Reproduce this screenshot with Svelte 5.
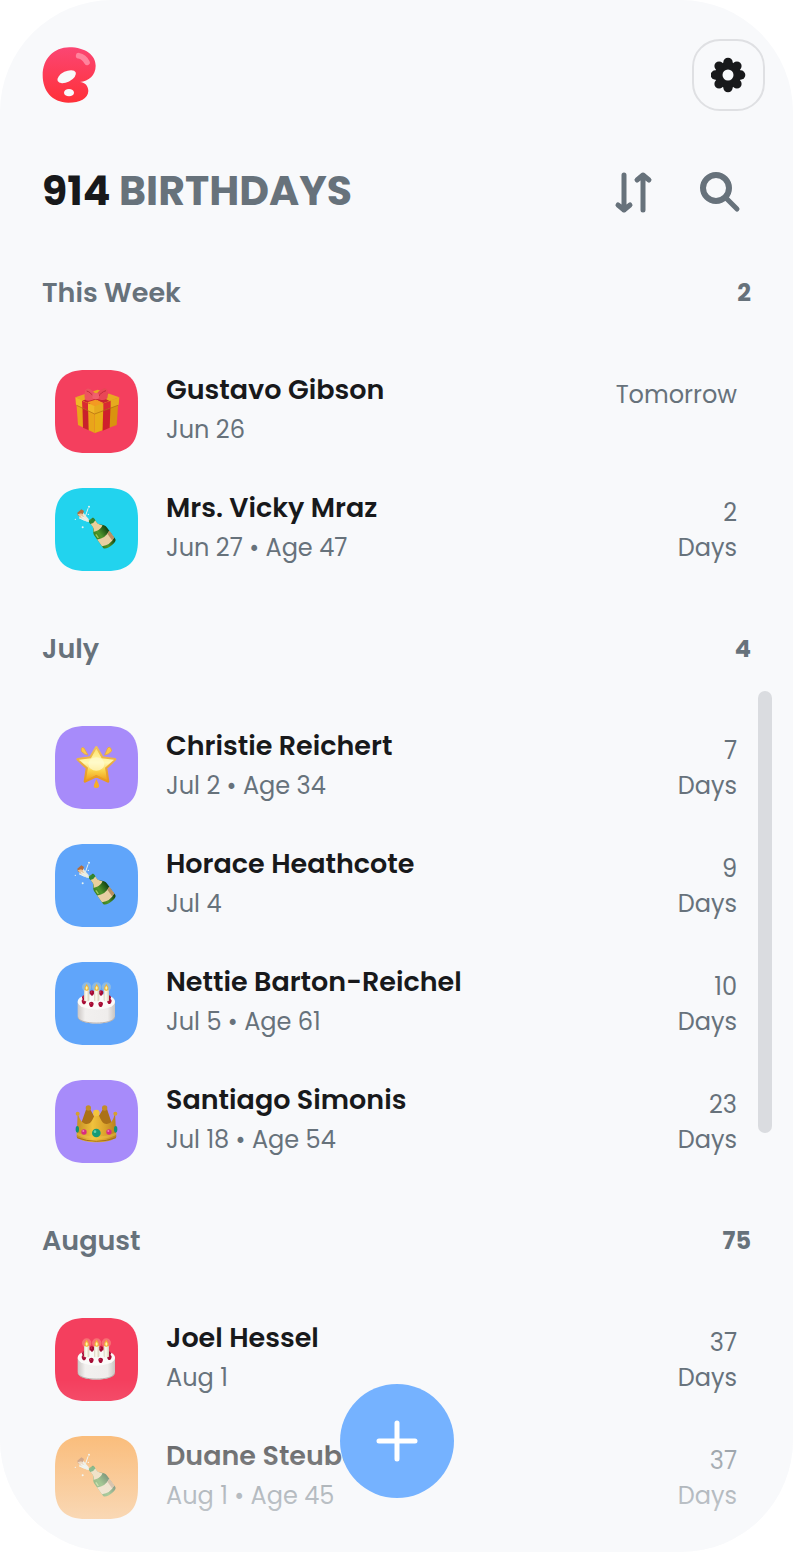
<script>
  const sections = [
    {
      title: 'This Week',
      count: 2,
      people: [
        { name: 'Gustavo Gibson', date: 'Jun 26', when: ['Tomorrow'], icon: 'gift', color: '#f43f5e' },
        { name: 'Mrs. Vicky Mraz', date: 'Jun 27 • Age 47', when: ['2', 'Days'], icon: 'bottle', color: '#22d3ee' }
      ]
    },
    {
      title: 'July',
      count: 4,
      people: [
        { name: 'Christie Reichert', date: 'Jul 2 • Age 34', when: ['7', 'Days'], icon: 'star', color: '#a78bfa' },
        { name: 'Horace Heathcote', date: 'Jul 4', when: ['9', 'Days'], icon: 'bottle', color: '#60a5fa' },
        { name: 'Nettie Barton-Reichel', date: 'Jul 5 • Age 61', when: ['10', 'Days'], icon: 'cake', color: '#60a5fa' },
        { name: 'Santiago Simonis', date: 'Jul 18 • Age 54', when: ['23', 'Days'], icon: 'crown', color: '#a78bfa' }
      ]
    },
    {
      title: 'August',
      count: 75,
      people: [
        { name: 'Joel Hessel', date: 'Aug 1', when: ['37', 'Days'], icon: 'cake', color: '#f43f5e' },
        { name: 'Duane Steuber', date: 'Aug 1 • Age 45', when: ['37', 'Days'], icon: 'bottle', color: '#fb9f3c' }
      ]
    }
  ];
  const lobes = [0, 45, 90, 135, 180, 225, 270, 315];
</script>

{#snippet gift()}
  <path d="M78 98 L134 118 L134 204 L84 180 Z" fill="#e9a51a" />
  <path d="M134 118 L206 98 L200 180 L134 204 Z" fill="#d9930f" />
  <path d="M134 124 L160 118 L157 196 L134 204 Z" fill="#e8ad17" />
  <path d="M97 112 L114 120 L116 196 L99 188 Z" fill="#c9202c" />
  <path d="M160 120 L182 112 L179 188 L158 197 Z" fill="#cf1f2d" />
  <path d="M76 97 L143 74 L208 97 L134 126 Z" fill="#e9a922" />
  <path d="M112 85 L126 80 L180 109 L160 117 Z M160 80 L176 86 L115 120 L97 107 Z" fill="#c92430" />
  <path d="M112 112 L136 104 L160 113 L134 124 Z" fill="#f39a22" />
  <path d="M76 97 L134 124 L134 146 L78 119 Z" fill="#f0b828" />
  <path d="M134 124 L208 97 L206 119 L134 146 Z" fill="#e6aa1e" />
  <path d="M96 107 L114 115 L114 138 L97 129 Z M160 115 L182 107 L182 128 L160 138 Z" fill="#d92932" />
  <path d="M80 121 L134 147 L204 121" fill="none" stroke="#ad6b12" stroke-width="2" />
  <path d="M137 99 C122 110 102 110 104 97 C102 80 107 68 116 71 C126 73 134 82 137 90 Z" fill="#ed5260" />
  <path d="M137 99 C154 109 174 107 173 94 C177 77 169 67 160 71 C148 75 142 83 137 90 Z" fill="#e94656" />
  <path d="M110 78 C119 80 126 88 129 94 M168 77 C157 80 150 87 147 93" stroke="#c22b3c" stroke-width="3" fill="none" />
  <rect x="127" y="84" width="20" height="19" rx="7" fill="#f0606c" />
{/snippet}

{#snippet bottle()}
  <g transform="rotate(-36 158 155)">
    <path d="M148 96 H165 V118 C166 127 181 130 181 146 V188 C181 200 136 200 136 188 V146 C136 130 147 127 148 118 Z" fill="url(#glass)" />
    <path d="M148 106 H165 V118 C166 124 171 128 174 132 C165 138 150 138 141 132 C145 128 148 124 148 118 Z" fill="#e9cf9c" />
    <path d="M136 157 Q158 169 181 157 V182 Q158 194 136 182 Z" fill="#e8cfa3" />
    <path d="M171 161 L181 157 V182 L171 186 Z" fill="#b78f61" />
    <path d="M147 98 Q157 103 166 98 V107 Q157 112 147 107 Z" fill="#2d8736" />
    <path d="M142 142 V155" stroke="#9fc95c" stroke-width="4" />
  </g>
  <path d="M88 104 L98 88 L116 108 L117 117 L110 116 Z" fill="#e8eadd" />
  <path d="M82 89 L94 79 L102 84 L98 94 L84 99 Z" fill="#b46d3c" />
  <path d="M83 94 L94 91 L102 101 L91 104 Z" fill="#e8c298" />
  <path d="M93 99 L111 111 M107 97 L114 77 M88 105 L103 112" stroke="#e8f3ef" stroke-width="3" stroke-linecap="round" />
  <circle cx="117" cy="71" r="3" fill="#e8f3ef" />
  <circle cx="76" cy="109" r="2" fill="#e8f3ef" />
  <circle cx="98" cy="133" r="3" fill="#e8f3ef" />
  <circle cx="115" cy="94" r="2" fill="#fff" />
{/snippet}

{#snippet star()}
  <g transform="translate(0 -3)">
    <path d="M139 82 L157 113 L195 118 L168 144 L174 184 L139 168 L105 184 L111 144 L83 118 L121 113 Z" fill="url(#gold)" stroke="url(#goldEdge)" stroke-width="8" stroke-linejoin="round" />
    <path d="M139 86 L155 115 L192 119 L165 143 L171 180 L139 164 L108 180 L114 143 L87 119 L123 115 Z" fill="url(#gold)" />
    <ellipse cx="139" cy="132" rx="24" ry="20" fill="#fffbd2" opacity=".7" />
    <path d="M94 85 Q97 81 102 84 L114 105 Q104 105 94 94 Z M182 84 Q177 79 173 84 L164 105 Q176 104 185 93 Z" fill="#fbc84a" stroke="#efa829" stroke-width="2" stroke-linejoin="round" />
    <path d="M139 177 L147 195 Q149 204 139 204 Q129 204 132 195 Z" fill="#f7ae25" />
  </g>
{/snippet}

{#snippet cake()}
  <path d="M83 134 V177 C83 207 195 207 195 177 V134 Z" fill="url(#icing)" />
  <ellipse cx="139" cy="134" rx="56" ry="24" fill="#fbfaf9" />
  <path d="M84 181 C88 204 190 204 194 181" fill="none" stroke="#b9b2ae" stroke-width="3" />
  {#each [[103, 121], [126, 106], [153, 106], [176, 121], [102, 132], [124, 140], [152, 140], [178, 131]] as [x, y]}
    <path d="M{x - 7} {y} C{x - 7} {y - 8} {x + 7} {y - 8} {x + 7} {y} C{x + 6} {y + 7} {x + 3} {y + 10} {x} {y + 10} C{x - 3} {y + 10} {x - 6} {y + 7} {x - 7} {y} Z" fill="#a60c35" />
    <circle cx={x - 2} cy={y - 1} r="2" fill="#d63c60" />
  {/each}
  {#each [110, 140, 169] as x}
    <circle cx={x} cy="90" r="14" fill="#fff1aa" opacity=".28" />
    <rect x={x - 8} y="98" width="16" height="35" rx="4" fill="url(#wax)" />
    <path d="M{x} 80 C{x + 3} 86 {x + 8} 90 {x + 6} 97 C{x + 4} 103 {x - 4} 103 {x - 6} 97 C{x - 8} 90 {x - 3} 86 {x} 80 Z" fill="#f4b634" />
    <ellipse cx={x} cy="93" rx="3" ry="5" fill="#fff4ae" />
  {/each}
{/snippet}

{#snippet crown()}
  <g transform="translate(0 -5)">
    <path d="M92 154 L109 106 Q114 99 120 107 L139 141 L159 107 Q164 99 171 107 L187 155 Z" fill="#ab7118" />
    <circle cx="115" cy="104" r="8" fill="#c38d28" />
    <circle cx="164" cy="104" r="8" fill="#c38d28" />
    <path d="M83 119 C90 143 98 150 108 152 C123 153 129 139 137 116 L143 116 C151 139 158 153 171 152 C185 150 190 139 195 119 L199 191 C182 212 98 212 80 191 Z" fill="url(#crownGold)" />
    <circle cx="83" cy="121" r="6" fill="#d6a02e" />
    <circle cx="196" cy="121" r="6" fill="#d6a02e" />
    <circle cx="139" cy="119" r="10" fill="#f3c53c" />
    <path d="M80 177 Q139 203 199 177 V185 Q139 211 80 185 Z" fill="#f0c84b" opacity=".45" />
    <path d="M81 193 Q139 215 198 193" fill="none" stroke="#a56f1b" stroke-width="3" />
    <circle cx="139" cy="179" r="13" fill="#159a76" />
    <circle cx="135" cy="175" r="4" fill="#63cfac" />
    <circle cx="102" cy="176" r="8" fill="#d92c80" />
    <circle cx="177" cy="176" r="8" fill="#d92c80" />
    <circle cx="100" cy="173" r="3" fill="#f080b3" />
    <circle cx="175" cy="173" r="3" fill="#f080b3" />
    <ellipse cx="82" cy="168" rx="5" ry="10" fill="#119373" />
    <ellipse cx="197" cy="168" rx="5" ry="10" fill="#119373" />
  </g>
{/snippet}

<main class="screen">
  <header class="topbar">
    <svg class="logo" viewBox="36 50 162 168" aria-hidden="true">
      <defs>
        <linearGradient id="brand" x1="0" y1="0" x2="0" y2="1">
          <stop offset="0" stop-color="#fb4673" />
          <stop offset="1" stop-color="#ff3038" />
        </linearGradient>
        <linearGradient id="glass">
          <stop offset="0" stop-color="#3c801f" />
          <stop offset=".35" stop-color="#4f962c" />
          <stop offset="1" stop-color="#12400f" />
        </linearGradient>
        <linearGradient id="gold" x1="0" y1="0" x2="0" y2="1">
          <stop offset="0" stop-color="#ffe36b" />
          <stop offset=".45" stop-color="#fff9b5" />
          <stop offset=".7" stop-color="#fbd44a" />
          <stop offset="1" stop-color="#f0a01d" />
        </linearGradient>
        <linearGradient id="goldEdge" x1="0" y1="0" x2="0" y2="1">
          <stop offset="0" stop-color="#efc05b" />
          <stop offset="1" stop-color="#e89820" />
        </linearGradient>
        <linearGradient id="icing">
          <stop offset="0" stop-color="#cbc6c4" />
          <stop offset=".2" stop-color="#f2f0ef" />
          <stop offset=".8" stop-color="#efedec" />
          <stop offset="1" stop-color="#c9c4c1" />
        </linearGradient>
        <linearGradient id="wax">
          <stop offset="0" stop-color="#d8d2bd" />
          <stop offset=".4" stop-color="#fffdf2" />
          <stop offset="1" stop-color="#d5ceb6" />
        </linearGradient>
        <linearGradient id="crownGold">
          <stop offset="0" stop-color="#c58d24" />
          <stop offset=".4" stop-color="#f0c23d" />
          <stop offset=".7" stop-color="#dda52c" />
          <stop offset="1" stop-color="#b67e20" />
        </linearGradient>
      </defs>
      <path d="M118 51 C166 51 197 75 197 106 C197 136 176 151 150 155 C166 156 175 168 175 182 C174 205 150 217 115 217 C66 217 38 181 38 135 C38 85 72 51 118 51 Z" fill="url(#brand)" />
      <ellipse cx="110" cy="139" rx="30" ry="16" transform="rotate(-26 110 139)" fill="#f8f9fb" />
      <ellipse cx="117" cy="187" rx="15" ry="11" fill="#f8f9fb" />
      <path d="M146 76 Q163 79 171 96" fill="none" stroke="#ff839d" stroke-width="17" stroke-linecap="round" />
    </svg>
    <button class="settings" aria-label="Settings">
      <svg width="35" height="36" viewBox="-17 -18 35 36" fill="#18191b">
        <circle r="13" />
        {#each lobes as angle}
          <circle cx="12.6" r="4.7" transform="rotate({angle})" />
        {/each}
        <circle r="5.5" fill="#f8f9fb" />
      </svg>
    </button>
  </header>

  <div class="titlebar">
    <h1>914 <span>BIRTHDAYS</span></h1>
    <div class="tools">
      <button class="tool" aria-label="Sort">
        <svg width="40" height="44" viewBox="0 0 40 44" fill="none" stroke="#67727b" stroke-width="5" stroke-linecap="round" stroke-linejoin="round">
          <path d="M10 5 V40 M4 35 L10 40 L16 35 M29 40 V5 M23 10 L29 5 L35 10" />
        </svg>
      </button>
      <button class="tool" aria-label="Search">
        <svg width="44" height="44" viewBox="0 0 44 44" fill="none" stroke="#67727b" stroke-width="6" stroke-linecap="round">
          <circle cx="18" cy="18" r="13" />
          <path d="M28 28 L39 39" stroke-width="5" />
        </svg>
      </button>
    </div>
  </div>

  <div class="sections">
    {#each sections as section}
      <section>
        <div class="heading">
          <h2>{section.title}</h2>
          <span class="count">{section.count}</span>
        </div>
        <ul>
          {#each section.people as person}
            <li>
              <svg class="avatar" viewBox="15 15 249 249" aria-hidden="true">
                <path d="M15 108 C15 44 44 15 108 15 H171 C235 15 264 44 264 108 V171 C264 235 235 264 171 264 H108 C44 264 15 235 15 171 Z" fill={person.color} />
                {#if person.icon === 'gift'}{@render gift()}
                {:else if person.icon === 'bottle'}{@render bottle()}
                {:else if person.icon === 'star'}{@render star()}
                {:else if person.icon === 'cake'}{@render cake()}
                {:else}{@render crown()}{/if}
              </svg>
              <div class="who">
                <h3>{person.name}</h3>
                <p>{person.date}</p>
              </div>
              <div class="when">
                {#each person.when as line}<span>{line}</span>{/each}
              </div>
            </li>
          {/each}
        </ul>
      </section>
    {/each}
  </div>

  <div class="scrollbar"></div>
  <div class="fade"></div>
  <button class="add" aria-label="Add birthday">
    <svg width="44" height="44" viewBox="0 0 44 44" fill="none" stroke="#fff" stroke-width="5" stroke-linecap="round">
      <path d="M22 4 V40 M4 22 H40" />
    </svg>
  </button>
</main>

<style>
  :global(body) {
    margin: 0;
    background: #fff;
  }
  .screen {
    position: relative;
    box-sizing: border-box;
    padding: 39px 28px 33px 42px;
    overflow: hidden;
    border-radius: 112px;
    background: #f8f9fb;
    color: #18191b;
    font-family: Poppins, Inter, sans-serif;
  }
  h1, h2, h3, p, ul {
    margin: 0;
    padding: 0;
    font-weight: 600;
  }
  button {
    display: grid;
    place-items: center;
    padding: 0;
    border: 0;
    background: none;
    cursor: pointer;
  }
  .topbar, .titlebar, .heading {
    display: flex;
    align-items: center;
    justify-content: space-between;
  }
  .logo {
    width: 54px;
    height: 56px;
  }
  .settings {
    box-sizing: border-box;
    width: 73px;
    height: 72px;
    border: 2px solid #dfe0e3;
    border-radius: 28px;
  }
  .titlebar {
    margin-top: 50px;
    padding-right: 23px;
  }
  h1 {
    font-size: 41px;
    font-weight: 700;
    line-height: 60px;
  }
  h1 span {
    color: #67727b;
  }
  .tools {
    display: flex;
    gap: 44px;
    padding-top: 2px;
  }
  .sections {
    display: grid;
    gap: 58px;
    margin-top: 52px;
  }
  .heading {
    padding-right: 14px;
    color: #67727b;
    line-height: 40px;
  }
  h2, h3 {
    font-size: 27px;
  }
  .count {
    font-size: 24px;
    font-weight: 700;
  }
  ul {
    display: grid;
    gap: 35px;
    margin-top: 57px;
    padding: 0 28px 0 13px;
    list-style: none;
  }
  li {
    display: flex;
    align-items: flex-start;
    gap: 28px;
    height: 83px;
  }
  .avatar {
    flex: none;
    width: 83px;
    height: 83px;
  }
  .who {
    flex: 1;
    min-width: 0;
    line-height: 40px;
    white-space: nowrap;
  }
  p, .when {
    color: #67727b;
    font-size: 24px;
    font-weight: 400;
  }
  .when {
    display: grid;
    padding-top: 7px;
    line-height: 35px;
    text-align: right;
  }
  .scrollbar {
    position: absolute;
    top: 691px;
    right: 21px;
    width: 14px;
    height: 442px;
    border-radius: 7px;
    background: #dadce0;
  }
  .fade {
    position: absolute;
    inset: auto 0 0;
    height: 172px;
    background: linear-gradient(#f8f9fb00, #f8f9fb10 20px, #f8f9fb55 56px, #f8f9fba0 138px, #f8f9fbc0);
    pointer-events: none;
  }
  .add {
    position: absolute;
    bottom: 54px;
    left: 50%;
    width: 114px;
    height: 114px;
    border-radius: 50%;
    background: #75b2ff;
    transform: translateX(-50%);
  }
</style>
